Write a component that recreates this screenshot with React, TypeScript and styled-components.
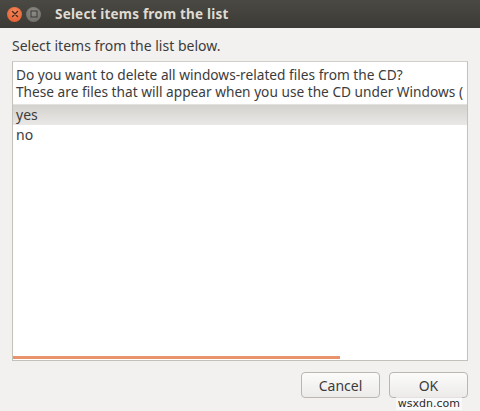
import React from "react";
import styled, { createGlobalStyle } from "styled-components";

const GlobalStyle = createGlobalStyle`
  html, body {
    margin: 0;
    padding: 0;
    background: #f2f1f0;
  }
  body {
    font-family: "Noto Sans", "Open Sans", sans-serif;
  }
`;

const choices = ["yes", "no"];

const App = () => {
  return (
    <>
      <GlobalStyle />
      <Window>
        <TitleBar>
          <CloseBtn>
            <svg width="8" height="8" viewBox="0 0 8 8">
              <path d="M1.5 1.5 L6.5 6.5 M6.5 1.5 L1.5 6.5" stroke="#4a2a1c" strokeWidth="1.4" strokeLinecap="round" />
            </svg>
          </CloseBtn>
          <MaxBtn>
            <svg width="8" height="8" viewBox="0 0 8 8">
              <rect x="1" y="1" width="6" height="6" fill="none" stroke="#3a3a38" strokeWidth="1" />
            </svg>
          </MaxBtn>
          <Title>Select items from the list</Title>
        </TitleBar>
        <Body>
          <Label>Select items from the list below.</Label>
          <ListBox>
            <Header>
              <HeaderLine>Do you want to delete all windows-related files from the CD?</HeaderLine>
              <HeaderLine>These are files that will appear when you use the CD under Windows (</HeaderLine>
            </Header>
            {choices.map((c, i) => (
              <Row key={c} selected={i === 0}>
                {c}
              </Row>
            ))}
            <Space />
            <ScrollTrack>
              <ScrollBar style={{ width: "72%" }} />
            </ScrollTrack>
          </ListBox>
          <Buttons>
            <Button>Cancel</Button>
            <Button>OK</Button>
          </Buttons>
        </Body>
        <Watermark>wsxdn.com</Watermark>
      </Window>
    </>
  );
};

export default App;

const Window = styled.div`
  width: 480px;
  height: 411px;
  display: flex;
  flex-direction: column;
  background: #f2f1f0;
  position: relative;
  overflow: hidden;
`;

const TitleBar = styled.div`
  height: 28px;
  display: flex;
  align-items: center;
  padding-left: 7px;
  background: linear-gradient(#4a4944, #3b3a36);
  box-sizing: border-box;
`;

const CloseBtn = styled.div`
  width: 15px;
  height: 15px;
  border-radius: 50%;
  background: radial-gradient(circle at 50% 35%, #f58a5c, #e0562a);
  display: flex;
  align-items: center;
  justify-content: center;
`;

const MaxBtn = styled.div`
  width: 15px;
  height: 15px;
  border-radius: 50%;
  margin-left: 4px;
  background: radial-gradient(circle at 50% 35%, #8c8b86, #6a6964);
  display: flex;
  align-items: center;
  justify-content: center;
`;

const Title = styled.div`
  margin-left: 14px;
  color: #dfdbd2;
  font-size: 13.5px;
  font-weight: 700;
  letter-spacing: 0.2px;
`;

const Body = styled.div`
  flex: 1;
  display: flex;
  flex-direction: column;
  padding: 0 12px;
`;

const Label = styled.div`
  height: 33px;
  line-height: 36px;
  font-size: 14px;
  color: #3c3c3c;
`;

const ListBox = styled.div`
  height: 300px;
  border: 1px solid #c4c1bb;
  border-top-color: #d2cfca;
  background: #ffffff;
  display: flex;
  flex-direction: column;
  box-sizing: border-box;
  overflow: hidden;
`;

const Header = styled.div`
  height: 43px;
  padding: 4px 0 0 3px;
  box-sizing: border-box;
  background: #ffffff;
  border-bottom: 1px solid #e4e2de;
  overflow: hidden;
`;

const HeaderLine = styled.div`
  height: 17px;
  line-height: 17px;
  font-size: 13.7px;
  color: #3c3c3c;
  white-space: nowrap;
`;

const Row = styled.div<{ selected?: boolean }>`
  height: 20px;
  line-height: 20px;
  padding-left: 3px;
  font-size: 14px;
  color: #3c3c3c;
  background: ${({ selected }) =>
    selected ? "linear-gradient(#d4d2ce, #e9e8e6)" : "#ffffff"};
`;

const Space = styled.div`
  flex: 1;
`;

const ScrollTrack = styled.div`
  height: 3px;
  margin-bottom: 1px;
`;

const ScrollBar = styled.div`
  height: 100%;
  background: #e9936c;
`;

const Buttons = styled.div`
  display: flex;
  justify-content: flex-end;
  gap: 9px;
  margin-top: 11px;
`;

const Button = styled.div`
  width: 79px;
  height: 26px;
  box-sizing: border-box;
  border: 1px solid #bab7b1;
  border-radius: 4px;
  background: linear-gradient(#fbfbfa, #ecebe9);
  display: flex;
  align-items: center;
  justify-content: center;
  font-size: 14px;
  color: #3c3c3c;
`;

const Watermark = styled.div`
  position: absolute;
  right: 18px;
  bottom: 1px;
  font-family: "DejaVu Sans", sans-serif;
  font-size: 11px;
  color: #2a2a2a;
  background: rgba(255, 255, 255, 0.6);
  padding: 0 2px;
`;
